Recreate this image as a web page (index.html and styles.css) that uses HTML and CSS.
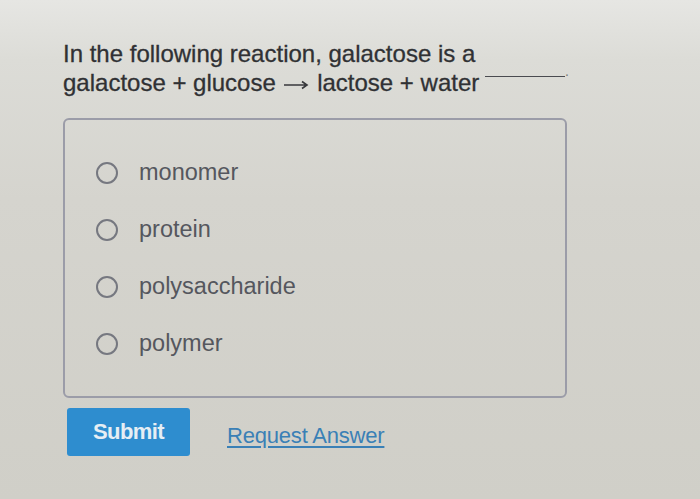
FILE: index.html
```html
<!DOCTYPE html>
<html lang="en">
<head>
    <meta charset="UTF-8">
    <meta name="viewport" content="width=device-width, initial-scale=1.0">
    <title>Question</title>
    <link rel="stylesheet" href="styles.css">
</head>
<body>
    <div class="page">
        <div class="question">
            <div class="q-line">In the following reaction, galactose is a <span class="blank-wrap"><span class="blank"></span>.</span></div>
            <div class="q-line">galactose + glucose <svg class="arrow" width="26" height="10" viewBox="0 0 26 10"><path d="M1 5H24M19 1.5L24 5L19 8.5" fill="none" stroke="#38393c" stroke-width="1.6"/></svg> lactose + water</div>
        </div>

        <div class="choices">
            <label class="choice"><span class="radio"></span><span class="choice-text">monomer</span></label>
            <label class="choice"><span class="radio"></span><span class="choice-text">protein</span></label>
            <label class="choice"><span class="radio"></span><span class="choice-text">polysaccharide</span></label>
            <label class="choice"><span class="radio"></span><span class="choice-text">polymer</span></label>
        </div>

        <div class="actions">
            <button class="submit-btn">Submit</button>
            <a href="#" class="request-link">Request Answer</a>
        </div>
    </div>
</body>
</html>
```

FILE: styles.css
```css
    html, body{
        margin: 0;
        height: 100%;
    }
    body{
        background: linear-gradient(to bottom, #e6e6e3 0%, #dcdcd7 12%, #d5d4ce 40%, #d0cfc8 100%);
        font-family: "Liberation Sans", Arial, sans-serif;
        overflow: hidden;
    }
    .page{
        padding: 39px 0 0 63px;
        width: 504px;
    }
    .question{
        color: #303134;
        font-size: 24px;
        -webkit-text-stroke: 0.3px #303134;
    }
    .q-line{
        height: 29px;
        line-height: 29px;
        white-space: nowrap;
    }
    .arrow{
        vertical-align: 1px;
        margin: 0 1px;
    }
    .blank-wrap{
        display: inline-block;
        vertical-align: -14px;
        line-height: 16px;
        height: 16px;
        margin-left: 3px;
        font-size: 14px;
        color: #777;
        -webkit-text-stroke: 0;
    }
    .blank{
        display: inline-block;
        width: 80px;
        height: 13px;
        border-bottom: 1px solid #4a4b50;
        vertical-align: top;
    }
    .choices{
        margin-top: 21px;
        border: 2px solid #9b9ca8;
        border-radius: 6px;
        padding: 24px 0 24px 31px;
    }
    .choice{
        display: flex;
        align-items: center;
        height: 57px;
    }
    .radio{
        width: 18px;
        height: 18px;
        border: 2px solid #767880;
        border-radius: 50%;
        margin-right: 21px;
        flex-shrink: 0;
    }
    .choice-text{
        color: #55575e;
        font-size: 23.5px;
    }
    .actions{
        display: flex;
        align-items: center;
        margin-top: 10px;
        margin-left: 4px;
    }
    .submit-btn{
        width: 123px;
        height: 48px;
        border: none;
        border-radius: 3px;
        background-color: #2e8dcf;
        color: #e6eef4;
        font-family: "Liberation Sans", Arial, sans-serif;
        font-size: 22px;
        font-weight: bold;
        letter-spacing: -0.6px;
    }
    .request-link{
        margin: 8px 0 0 37px;
        color: #3a80b6;
        font-size: 22px;
        letter-spacing: -0.2px;
        text-decoration: underline;
        text-underline-offset: 3px;
    }
```
